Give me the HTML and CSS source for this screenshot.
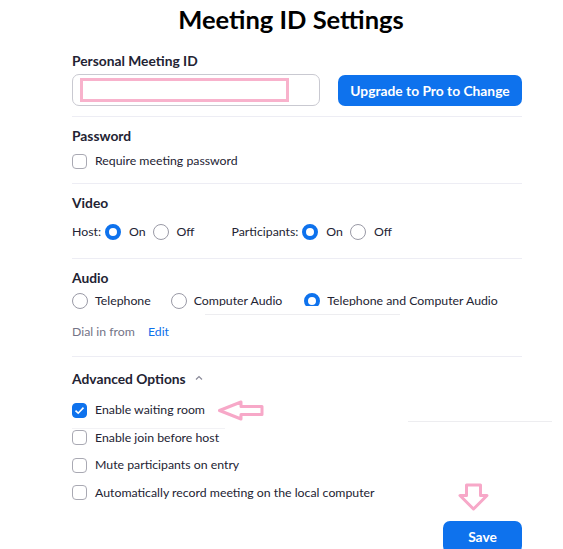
FILE: index.html
```html
<!DOCTYPE html>
<html>
<head>
<meta charset="utf-8">
<link rel="stylesheet" href="styles.css">
</head>
<body>
<div class="page">
  <h1 class="title">Meeting ID Settings</h1>

  <section class="sec sec-id">
    <div class="label">Personal Meeting ID</div>
    <div class="id-row">
      <div class="id-input"><div class="redact"></div></div>
      <button class="btn">Upgrade to Pro to Change</button>
    </div>
  </section>

  <section class="sec sec-pw">
    <div class="label">Password</div>
    <div class="row"><span class="cb"></span><span>Require meeting password</span></div>
  </section>

  <section class="sec sec-video">
    <div class="label">Video</div>
    <div class="row video-row">
      <span class="lbl">Host:</span>
      <span class="rd on"></span><span class="opt">On</span>
      <span class="rd"></span><span class="opt">Off</span>
      <span class="lbl part">Participants:</span>
      <span class="rd on"></span><span class="opt">On</span>
      <span class="rd"></span><span class="opt">Off</span>
    </div>
  </section>

  <section class="sec sec-audio">
    <div class="label">Audio</div>
    <div class="row audio-row">
      <span class="rd"></span><span class="aopt a1">Telephone</span>
      <span class="rd"></span><span class="aopt a2">Computer Audio</span>
      <span class="rd on"></span><span class="aopt">Telephone and Computer Audio</span>
    </div>
    <div class="row dial"><span class="gray">Dial in from</span><a class="edit">Edit</a></div>
    <div class="mask"><div class="mask-line"></div></div>
  </section>

  <section class="sec sec-adv">
    <div class="label adv-label">Advanced Options
      <svg class="caret" width="8" height="6" viewBox="0 0 8 6"><path d="M1 4.5 L4 1.5 L7 4.5" fill="none" stroke="#8a8a99" stroke-width="1.2"/></svg>
    </div>
    <div class="checks">
      <div class="row"><span class="cb checked"><svg width="11" height="9" viewBox="0 0 11 9"><path d="M1.5 4.6 L4.2 7.2 L9.5 1.6" fill="none" stroke="#fff" stroke-width="1.6"/></svg></span><span>Enable waiting room</span>
        <svg class="arrow-left" width="48" height="21" viewBox="0 0 48 21"><path d="M2.5 10.5 L24 2 L24 6.5 L45 6.5 L45 14.5 L24 14.5 L24 19 Z" fill="#fff" stroke="#f7a8c8" stroke-width="3" stroke-linejoin="round"/></svg>
      </div>
      <div class="row"><span class="cb"></span><span>Enable join before host</span></div>
      <div class="row"><span class="cb"></span><span>Mute participants on entry</span></div>
      <div class="row"><span class="cb"></span><span>Automatically record meeting on the local computer</span></div>
    </div>
    <div class="line1"></div>
    <div class="line2"></div>
    <svg class="arrow-down" width="31" height="28" viewBox="0 0 31 28"><path d="M15.5 26 L2 12.5 L8.5 12.5 L8.5 2 L22.5 2 L22.5 12.5 L29 12.5 Z" fill="#fff" stroke="#f7a8c8" stroke-width="3" stroke-linejoin="round"/></svg>
    <div class="save-row"><button class="btn save">Save</button></div>
  </section>
</div>
</body>
</html>
```

FILE: styles.css
```css
html, body {
  margin: 0;
  padding: 0;
  background: #fff;
}
body {
  font-family: "Lato", "Noto Sans", sans-serif;
  font-size: 12.3px;
  color: #232333;
  overflow: hidden;
}
.page {
  width: 450px;
  margin-left: 72px;
  position: relative;
}
.title {
  margin: 0;
  height: 40px;
  line-height: 38px;
  font-size: 25.5px;
  font-weight: 700;
  text-align: center;
  padding-right: 12px;
  color: #000;
}
.sec {
  border-top: 1px solid #ededf4;
  position: relative;
}
.sec-id {
  border-top: none;
  margin-top: 12px;
  padding-bottom: 10px;
}
.label {
  font-weight: 700;
  font-size: 13.8px;
  line-height: 18px;
  height: 18px;
  color: #232333;
  white-space: nowrap;
}
.id-row {
  margin-top: 4px;
  display: flex;
  justify-content: space-between;
  align-items: center;
}
.id-input {
  width: 239px;
  height: 30px;
  border: 1px solid #c9c9d1;
  border-radius: 7px;
  display: flex;
  align-items: center;
  padding-left: 7px;
  box-sizing: content-box;
}
.redact {
  width: 203px;
  height: 18px;
  border: 3px solid #f8b2cc;
  background: #fff;
}
.btn {
  background: #0e72ed;
  color: #fff;
  border: none;
  border-radius: 7px;
  font-family: inherit;
  font-weight: 700;
  font-size: 13.8px;
  height: 31px;
  width: 184px;
  padding: 0;
}
.row {
  display: flex;
  align-items: center;
  height: 20px;
  line-height: 20px;
  position: relative;
  white-space: nowrap;
}
.row > span { flex: none; }
.cb {
  width: 13px;
  height: 13px;
  border: 1px solid #a9a9b3;
  border-radius: 4px;
  margin-right: 8px;
  flex: none;
  display: flex;
  align-items: center;
  justify-content: center;
}
.cb.checked {
  background: #0e72ed;
  border-color: #0e72ed;
}
.sec-pw {
  padding-top: 10px;
  padding-bottom: 12px;
}
.sec-pw .row { margin-top: 6px; }
.sec-video {
  padding-top: 10px;
  padding-bottom: 16px;
}
.video-row { margin-top: 10px; }
.rd {
  width: 14px;
  height: 14px;
  border: 1px solid #9a9aa6;
  border-radius: 50%;
  flex: none;
  background: #fff;
}
.rd.on {
  width: 8px;
  height: 8px;
  border: 4px solid #0e72ed;
}
.lbl { margin-right: 4px; }
.opt { margin-left: 8px; margin-right: 7px; }
.part { margin-left: 30px; }
.sec-audio {
  padding-top: 10px;
  padding-bottom: 14px;
}
.audio-row { margin-top: 4px; }
.aopt { margin-left: 7px; }
.a1 { margin-right: 20px; }
.a2 { margin-right: 22px; }
.dial { margin-top: 11px; }
.gray { color: #747487; }
.edit { color: #0e71eb; margin-left: 13px; }
.mask {
  position: absolute;
  left: 133px;
  top: 47px;
  width: 195px;
  height: 51px;
  background: #fff;
}
.mask-line {
  margin-top: 8px;
  border-top: 1px solid #ededf0;
}
.sec-adv {
  padding-top: 13px;
}
.adv-label {
  display: flex;
  align-items: center;
}
.caret { margin-left: 9px; margin-top: -2px; }
.checks {
  margin-top: 12px;
  display: flex;
  flex-direction: column;
  gap: 7.6px;
}
.arrow-left {
  position: absolute;
  left: 145px;
  top: 0px;
}
.arrow-down {
  position: absolute;
  left: 386px;
  top: 126px;
}
.line1 {
  position: absolute;
  left: 0;
  top: 71px;
  width: 153px;
  border-top: 1px solid #f2f2f5;
}
.line2 {
  position: absolute;
  left: 336px;
  top: 64px;
  width: 144px;
  border-top: 1px solid #ededf0;
}
.save-row {
  display: flex;
  justify-content: flex-end;
  margin-top: 18px;
}
.save {
  width: 79px;
  height: 32px;
}
```
